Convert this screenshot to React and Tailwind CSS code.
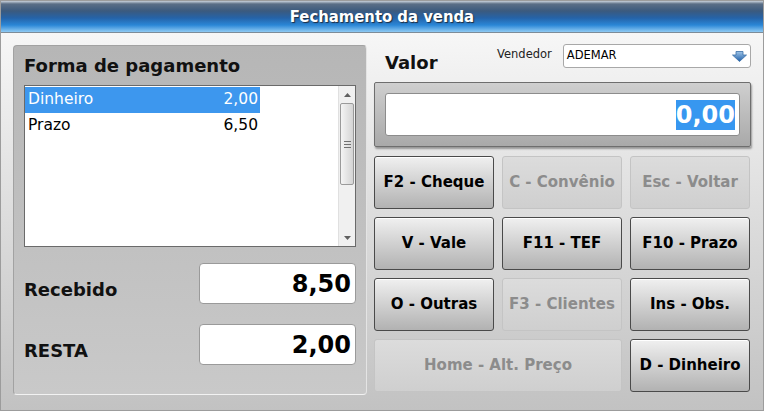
import React from "react";

const font = { fontFamily: '"DejaVu Sans", Verdana, sans-serif' };

const Btn = ({ children, disabled, wide }) => (
  <button
    className={
      (wide ? "col-span-2 " : "") +
      (disabled
        ? "h-[53px] rounded-[3px] border border-[#c4c4c4] bg-gradient-to-b from-[#dcdcdc] to-[#cfcfcf] text-[#8c8c8c] text-[15px] font-bold"
        : "h-[53px] rounded-[3px] border border-[#4a4a4a] bg-gradient-to-b from-[#f0f0f0] to-[#b2b2b2] text-black text-[15px] font-bold shadow-[inset_0_1px_0_#ffffff]")
    }
  >
    {children}
  </button>
);

const ScrollBar = () => (
  <div className="w-[17px] h-full flex flex-col bg-[#f0f0f0] border-l border-[#e0e0e0]">
    <div className="h-[17px] flex items-center justify-center">
      <svg width="7" height="4" viewBox="0 0 7 4">
        <path d="M0 4 L3.5 0 L7 4 Z" fill="#606060" />
      </svg>
    </div>
    <div className="mx-[1px] h-[82px] rounded-[2px] border border-[#9a9a9a] bg-gradient-to-r from-[#f4f4f4] to-[#d4d4d4] flex flex-col items-center justify-center gap-[2px]">
      <div className="w-[7px] h-[1px] bg-[#707070]" />
      <div className="w-[7px] h-[1px] bg-[#707070]" />
      <div className="w-[7px] h-[1px] bg-[#707070]" />
    </div>
    <div className="flex-1" />
    <div className="h-[17px] flex items-center justify-center">
      <svg width="7" height="4" viewBox="0 0 7 4">
        <path d="M0 0 L3.5 4 L7 0 Z" fill="#606060" />
      </svg>
    </div>
  </div>
);

export default function App() {
  return (
    <div
      className="w-[764px] h-[411px] flex flex-col border border-[#9c9c9c] bg-gradient-to-b from-[#fbfbfb] to-[#c2c2c2]"
      style={font}
    >
      <div className="h-[32px] shrink-0 flex items-center justify-center pt-[1px] border-b border-[#7d8c99] bg-[linear-gradient(to_bottom,#c9d2dc_0px,#5b6e86_3px,#3b5a7e_10px,#2563a8_17px,#2a86d6_24px,#8fcaf3_31px)]">
        <span
          className="text-white text-[16.5px] font-bold [text-shadow:1px_1px_1px_#1d2c40]"
          style={{ fontFamily: '"DejaVu Sans Condensed", "DejaVu Sans", sans-serif', fontStretch: "condensed" }}
        >
          Fechamento da venda
        </span>
      </div>

      <div className="flex pl-[12px] pt-[12px] gap-[7px]">
        {/* left panel */}
        <div className="w-[354px] h-[350px] rounded-[4px] border border-[#a2a2a2] border-b-[#f2f2f2] border-r-[#e4e4e4] bg-gradient-to-b from-[#b6b6b6] to-[#c9c9c9] pl-[10px] pr-[10px] flex flex-col">
          <div className="h-[39px] flex items-end pb-[6px] text-[18px] font-bold text-[#111]">
            Forma de pagamento
          </div>
          <div className="h-[162px] border border-[#6a6a6a] bg-white flex">
            <div className="flex-1 pt-[1px]">
              <div className="w-[235px] h-[26px] bg-[#3d97ee] text-white flex items-center justify-between pl-[3px] pr-[2px] text-[15.5px]">
                <span>Dinheiro</span>
                <span>2,00</span>
              </div>
              <div className="w-[235px] h-[26px] text-black flex items-center justify-between pl-[3px] pr-[2px] text-[15.5px]">
                <span>Prazo</span>
                <span>6,50</span>
              </div>
            </div>
            <ScrollBar />
          </div>
          <div className="flex items-end justify-between mt-[16px]">
            <span className="text-[18px] font-bold text-[#111] pb-[1px]">Recebido</span>
            <div className="w-[157px] h-[41px] rounded-[4px] border border-[#9a9a9a] bg-white flex items-center justify-end pr-[4px] text-[24px] font-bold text-black">
              8,50
            </div>
          </div>
          <div className="flex items-end justify-between mt-[20px]">
            <span className="text-[18px] font-bold text-[#111] pb-[1px]">RESTA</span>
            <div className="w-[157px] h-[41px] rounded-[4px] border border-[#9a9a9a] bg-white flex items-center justify-end pr-[4px] text-[24px] font-bold text-black">
              2,00
            </div>
          </div>
        </div>

        {/* right column */}
        <div className="w-[377px] flex flex-col">
          <div className="h-[24px] mt-[-1px] flex items-center">
            <span className="w-[123px] pl-[11px] text-[18px] font-bold text-[#111] mt-[13px]">Valor</span>
            <span className="text-[11.5px] text-[#222] mr-[11px] mt-[-3px]">Vendedor</span>
            <div className="w-[188px] h-[24px] rounded-[3px] border border-[#a8a8a8] bg-white flex items-center justify-between pl-[3px] pr-[3px] text-[11.5px] text-black">
              <span>ADEMAR</span>
              <svg width="15" height="11" viewBox="0 0 15 11">
                <defs>
                  <linearGradient id="ar" x1="0" y1="0" x2="0" y2="1">
                    <stop offset="0" stopColor="#9ec4e8" />
                    <stop offset="1" stopColor="#1f5fa8" />
                  </linearGradient>
                </defs>
                <path d="M4 0.5 H11 V4 H14.5 L7.5 10.5 L0.5 4 H4 Z" fill="url(#ar)" stroke="#3b6fa6" strokeWidth="0.8" />
              </svg>
            </div>
          </div>
          <div className="mt-[14px] h-[65px] rounded-[2px] border border-[#6e6e6e] bg-gradient-to-b from-[#cfcfcf] to-[#a9a9a9] shadow-[1px_2px_2px_rgba(0,0,0,0.35)] px-[10px] py-[10px]">
            <div className="h-full rounded-[3px] border border-[#8c8c8c] bg-white flex items-center justify-end pr-[4px]">
              <span className="bg-[#3797f0] text-white text-[24px] font-bold leading-[30px]">0,00</span>
            </div>
          </div>
          <div className="mt-[9px] grid grid-cols-3 gap-x-[8px] gap-y-[8px] pr-[1px]">
            <Btn>F2 - Cheque</Btn>
            <Btn disabled>C - Convênio</Btn>
            <Btn disabled>Esc - Voltar</Btn>
            <Btn>V - Vale</Btn>
            <Btn>F11 - TEF</Btn>
            <Btn>F10 - Prazo</Btn>
            <Btn>O - Outras</Btn>
            <Btn disabled>F3 - Clientes</Btn>
            <Btn>Ins - Obs.</Btn>
            <Btn disabled wide>Home - Alt. Preço</Btn>
            <Btn>D - Dinheiro</Btn>
          </div>
        </div>
      </div>
    </div>
  );
}
